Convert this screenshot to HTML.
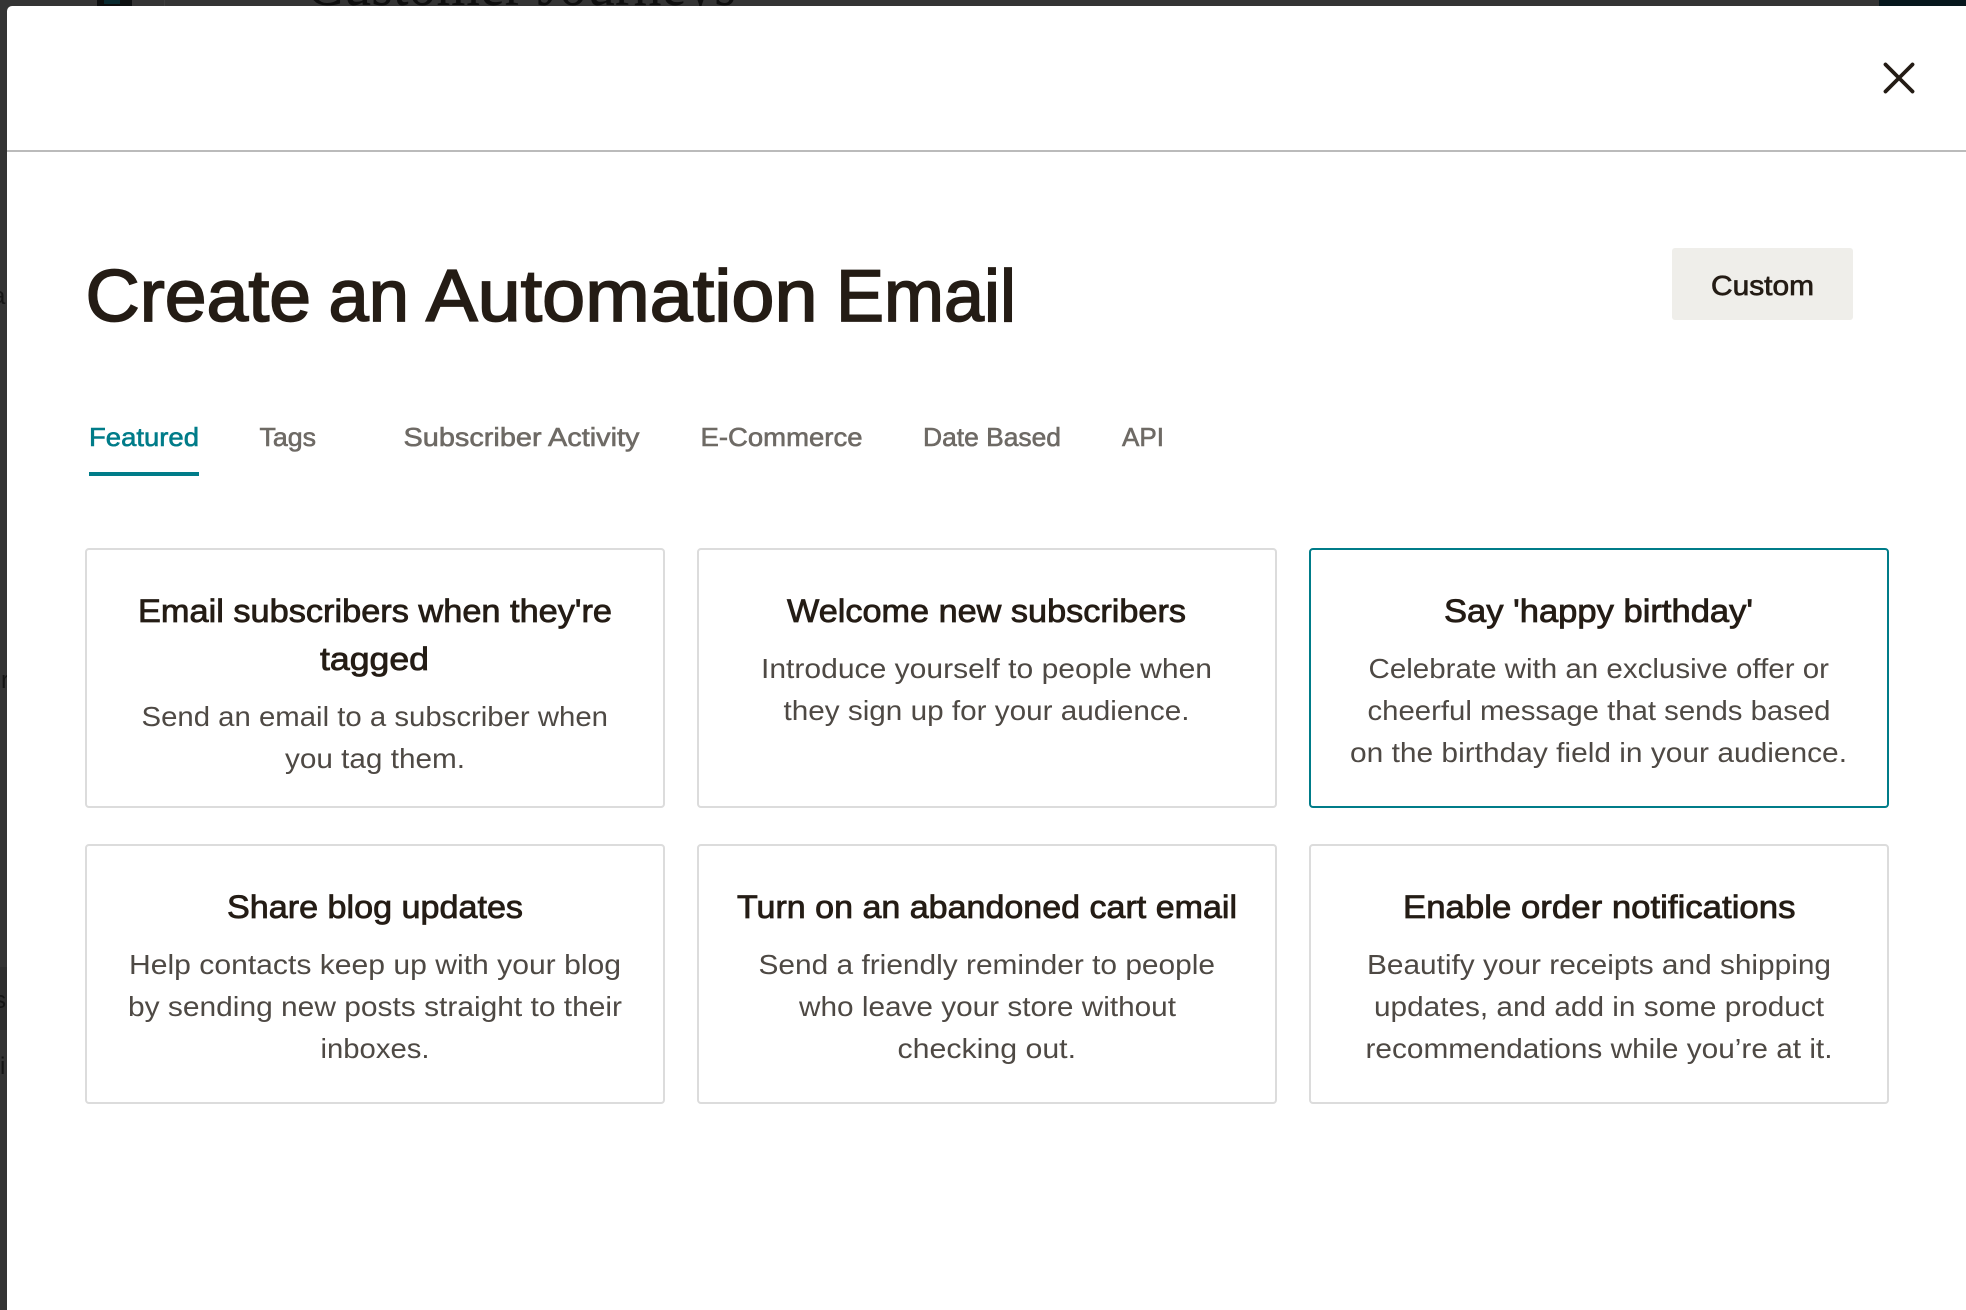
<!DOCTYPE html>
<html lang="en">
<head>
<meta charset="utf-8">
<title>Create an Automation Email</title>
<style>
html,body{margin:0;padding:0;width:1966px;height:1310px;overflow:hidden;background:#343434}
svg{display:block}
text{font-family:"Liberation Sans",sans-serif}
.t{font-size:32px;fill:#241c15;stroke:#241c15;stroke-width:.8px}
.b{font-size:28px;fill:#4e4944}
.tab{font-size:26px;fill:#6e6a65;stroke:#6e6a65;stroke-width:.6px}
.card{fill:#fff;stroke:#dcdcdc;stroke-width:2}
.h{font-size:73px;fill:#241c15;stroke:#241c15;stroke-width:1.7px}
</style>
</head>
<body>
<svg width="1966" height="1310" viewBox="0 0 1966 1310" xmlns="http://www.w3.org/2000/svg">
  <!-- backdrop -->
  <rect width="1966" height="1310" fill="#343434"/>
  <rect x="1879" y="0" width="87" height="6" fill="#06171d"/>
  <rect x="97" y="0" width="35" height="6" fill="#0d0f10"/>
  <rect x="104" y="0" width="16" height="4" fill="#0a2a30"/>
  <rect x="164" y="0" width="1" height="6" fill="#3e3e3e"/>
  <text x="306" y="5" textLength="430" lengthAdjust="spacingAndGlyphs" font-size="66" fill="#0e0e0e" style='font-family:"Liberation Serif",serif'>Customer Journeys</text>
  <rect x="0" y="967" width="7" height="63" fill="#2e2e2e"/>
  <text x="-8" y="304" font-size="24" fill="#151515">a</text>
  <text x="1" y="688" font-size="24" fill="#151515">r</text>
  <text x="-6" y="1008" font-size="24" fill="#151515">s</text>
  <text x="0" y="1074" font-size="24" fill="#151515">i</text>

  <!-- modal -->
  <path d="M7 1310V11a5 5 0 0 1 5-5H1966V1310Z" fill="#fff"/>
  <rect x="7" y="150" width="1959" height="2" fill="#bbbbbb"/>

  <!-- close -->
  <path d="M1885.500 64.500L1912.500 91.500M1912.500 64.500L1885.500 91.500" stroke="#241c15" stroke-width="3.800" stroke-linecap="round" fill="none"/>

  <!-- heading -->
  <text class="h" x="85.500" y="321" textLength="225.500" lengthAdjust="spacingAndGlyphs">Create</text>
  <text class="h" x="328.500" y="321" textLength="80.500" lengthAdjust="spacingAndGlyphs"> an</text>
  <text class="h" x="426" y="321" textLength="391.500" lengthAdjust="spacingAndGlyphs"> Automation</text>
  <text class="h" x="836" y="321" textLength="180" lengthAdjust="spacingAndGlyphs"> Email</text>

  <!-- custom -->
  <rect x="1672" y="248" width="181" height="72" rx="3" fill="#efeeea"/>
  <text x="1711" y="295" textLength="103" lengthAdjust="spacingAndGlyphs" font-size="28" fill="#241c15" stroke="#241c15" stroke-width=".7">Custom</text>

  <!-- tabs -->
  <text class="tab" x="89" y="446" textLength="110" lengthAdjust="spacingAndGlyphs" style="fill:#007c89;stroke:#007c89">Featured</text>
  <rect x="89" y="472" width="110" height="4" fill="#007c89"/>
  <text class="tab" x="259.500" y="446" textLength="56.500" lengthAdjust="spacingAndGlyphs">Tags</text>
  <text class="tab" x="403.500" y="446" textLength="236" lengthAdjust="spacingAndGlyphs">Subscriber Activity</text>
  <text class="tab" x="700.500" y="446" textLength="162" lengthAdjust="spacingAndGlyphs">E-Commerce</text>
  <text class="tab" x="923" y="446" textLength="138" lengthAdjust="spacingAndGlyphs">Date Based</text>
  <text class="tab" x="1122" y="446" textLength="42" lengthAdjust="spacingAndGlyphs">API</text>

  <!-- cards -->
  <rect class="card" x="86" y="549" width="578" height="258" rx="3"/>
  <rect class="card" x="698" y="549" width="578" height="258" rx="3"/>
  <rect class="card" x="1310" y="549" width="578" height="258" rx="3" style="stroke:#007c89"/>
  <rect class="card" x="86" y="845" width="578" height="258" rx="3"/>
  <rect class="card" x="698" y="845" width="578" height="258" rx="3"/>
  <rect class="card" x="1310" y="845" width="578" height="258" rx="3"/>

  <!-- card 1 -->
  <text class="t" x="138" y="622" textLength="474" lengthAdjust="spacingAndGlyphs">Email subscribers when they're</text>
  <text class="t" x="320" y="670" textLength="109" lengthAdjust="spacingAndGlyphs">tagged</text>
  <text class="b" x="141.500" y="726" textLength="466.500" lengthAdjust="spacingAndGlyphs">Send an email to a subscriber when</text>
  <text class="b" x="285" y="768" textLength="180" lengthAdjust="spacingAndGlyphs">you tag them.</text>

  <!-- card 2 -->
  <text class="t" x="787" y="622" textLength="399" lengthAdjust="spacingAndGlyphs">Welcome new subscribers</text>
  <text class="b" x="761" y="678" textLength="451" lengthAdjust="spacingAndGlyphs">Introduce yourself to people when</text>
  <text class="b" x="783.500" y="720" textLength="406" lengthAdjust="spacingAndGlyphs">they sign up for your audience.</text>

  <!-- card 3 -->
  <text class="t" x="1444" y="622" textLength="309" lengthAdjust="spacingAndGlyphs">Say 'happy birthday'</text>
  <text class="b" x="1368.500" y="678" textLength="460.500" lengthAdjust="spacingAndGlyphs">Celebrate with an exclusive offer or</text>
  <text class="b" x="1367.500" y="720" textLength="463" lengthAdjust="spacingAndGlyphs">cheerful message that sends based</text>
  <text class="b" x="1350" y="762" textLength="497" lengthAdjust="spacingAndGlyphs">on the birthday field in your audience.</text>

  <!-- card 4 -->
  <text class="t" x="227" y="918" textLength="296" lengthAdjust="spacingAndGlyphs">Share blog updates</text>
  <text class="b" x="129" y="974" textLength="492" lengthAdjust="spacingAndGlyphs">Help contacts keep up with your blog</text>
  <text class="b" x="128" y="1016" textLength="494" lengthAdjust="spacingAndGlyphs">by sending new posts straight to their</text>
  <text class="b" x="320.500" y="1058" textLength="109" lengthAdjust="spacingAndGlyphs">inboxes.</text>

  <!-- card 5 -->
  <text class="t" x="737" y="918" textLength="500" lengthAdjust="spacingAndGlyphs">Turn on an abandoned cart email</text>
  <text class="b" x="758.500" y="974" textLength="456.500" lengthAdjust="spacingAndGlyphs">Send a friendly reminder to people</text>
  <text class="b" x="799" y="1016" textLength="377" lengthAdjust="spacingAndGlyphs">who leave your store without</text>
  <text class="b" x="897.500" y="1058" textLength="178.500" lengthAdjust="spacingAndGlyphs">checking out.</text>

  <!-- card 6 -->
  <text class="t" x="1403" y="918" textLength="392.500" lengthAdjust="spacingAndGlyphs">Enable order notifications</text>
  <text class="b" x="1367" y="974" textLength="464" lengthAdjust="spacingAndGlyphs">Beautify your receipts and shipping</text>
  <text class="b" x="1374" y="1016" textLength="450" lengthAdjust="spacingAndGlyphs">updates, and add in some product</text>
  <text class="b" x="1365.500" y="1058" textLength="467" lengthAdjust="spacingAndGlyphs">recommendations while you’re at it.</text>
</svg>
</body>
</html>
